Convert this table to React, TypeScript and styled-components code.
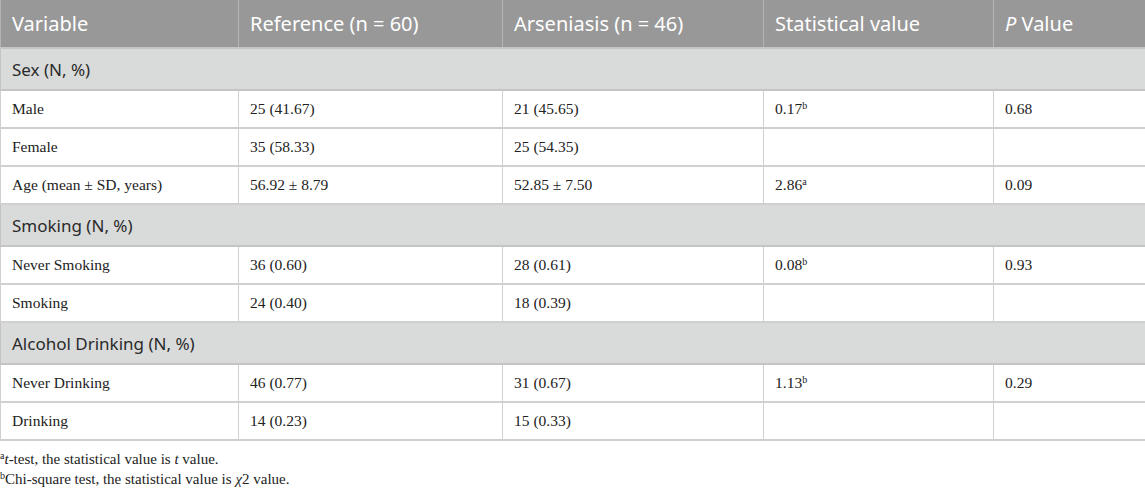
import React from "react";
import styled, { createGlobalStyle } from "styled-components";

const Global = createGlobalStyle`
  html, body { margin: 0; padding: 0; background: #ffffff; }
  body { font-family: "Liberation Serif", "Times New Roman", serif; color: #222; }
`;

const Page = styled.div`
  width: 1145px;
`;

const Table = styled.table`
  width: 1145px;
  border-collapse: collapse;
  table-layout: fixed;
`;

const HeadCell = styled.th<{ $w: number }>`
  width: ${(p) => p.$w}px;
  height: 48px;
  padding: 0 11px;
  box-sizing: border-box;
  background: #989898;
  color: #ffffff;
  font-family: "Noto Sans", "Open Sans", sans-serif;
  font-weight: 400;
  font-size: 20px;
  text-align: left;
  border: 1px solid #b4b4b4;
  border-top: none;
`;

const SectionCell = styled.td`
  height: 40px;
  padding: 0 11px;
  background: #d9dbda;
  color: #2a2a2a;
  font-family: "Noto Sans", "Open Sans", sans-serif;
  font-size: 17px;
  border: 1px solid #c4c4c4;
  border-width: 2px 1px;
`;

const Cell = styled.td`
  height: 36px;
  padding: 0 11px;
  font-family: "Liberation Serif", "Times New Roman", serif;
  font-size: 15.5px;
  color: #222;
  border: 1px solid #d0d0d0;
  border-width: 2px 1px;
`;

const Sup = styled.sup`
  font-size: 10px;
  line-height: 0;
  vertical-align: 5px;
`;

const Notes = styled.div`
  padding-top: 8px;
  font-family: "Liberation Serif", "Times New Roman", serif;
  font-size: 15px;
  color: #222;
  line-height: 20px;
`;

const Note = styled.div``;

type Row =
  | { kind: "section"; label: string }
  | { kind: "data"; cells: [string, string, string, string, string]; sup?: string };

const rows: Row[] = [
  { kind: "section", label: "Sex (N, %)" },
  { kind: "data", cells: ["Male", "25 (41.67)", "21 (45.65)", "0.17", "0.68"], sup: "b" },
  { kind: "data", cells: ["Female", "35 (58.33)", "25 (54.35)", "", ""] },
  { kind: "data", cells: ["Age (mean ± SD, years)", "56.92 ± 8.79", "52.85 ± 7.50", "2.86", "0.09"], sup: "a" },
  { kind: "section", label: "Smoking (N, %)" },
  { kind: "data", cells: ["Never Smoking", "36 (0.60)", "28 (0.61)", "0.08", "0.93"], sup: "b" },
  { kind: "data", cells: ["Smoking", "24 (0.40)", "18 (0.39)", "", ""] },
  { kind: "section", label: "Alcohol Drinking (N, %)" },
  { kind: "data", cells: ["Never Drinking", "46 (0.77)", "31 (0.67)", "1.13", "0.29"], sup: "b" },
  { kind: "data", cells: ["Drinking", "14 (0.23)", "15 (0.33)", "", ""] },
];

export default function App() {
  return (
    <Page>
      <Global />
      <Table>
        <thead>
          <tr>
            <HeadCell $w={238}>Variable</HeadCell>
            <HeadCell $w={264}>Reference (n = 60)</HeadCell>
            <HeadCell $w={261}>Arseniasis (n = 46)</HeadCell>
            <HeadCell $w={230}>Statistical value</HeadCell>
            <HeadCell $w={152}>
              <i>P</i> Value
            </HeadCell>
          </tr>
        </thead>
        <tbody>
          {rows.map((r, i) =>
            r.kind === "section" ? (
              <tr key={i}>
                <SectionCell colSpan={5}>{r.label}</SectionCell>
              </tr>
            ) : (
              <tr key={i}>
                {r.cells.map((c, j) => (
                  <Cell key={j}>
                    {c}
                    {j === 3 && r.sup ? <Sup>{r.sup}</Sup> : null}
                  </Cell>
                ))}
              </tr>
            )
          )}
        </tbody>
      </Table>
      <Notes>
        <Note>
          <Sup>a</Sup>
          <i>t</i>-test, the statistical value is <i>t</i> value.
        </Note>
        <Note>
          <Sup>b</Sup>Chi-square test, the statistical value is <i>χ</i>2 value.
        </Note>
      </Notes>
    </Page>
  );
}
